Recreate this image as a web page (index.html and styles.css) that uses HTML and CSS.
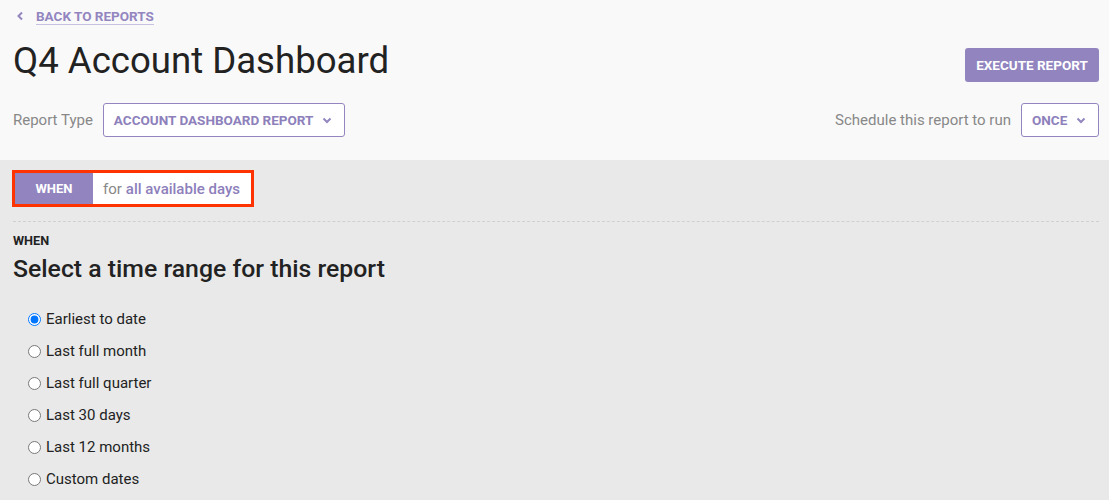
FILE: index.html
```html
<!DOCTYPE html>
<html>
<head>
<meta charset="utf-8">
<link rel="stylesheet" href="styles.css">
</head>
<body>
<header class="top">
  <a class="back" href="#"><svg class="back-ico" width="8" height="10" viewBox="0 0 8 10"><path d="M6 1.5 L2.5 5 L6 8.5" fill="none" stroke="#9386c0" stroke-width="2"/></svg><span class="back-text">BACK TO REPORTS</span></a>
  <div class="title-row">
    <h1 class="title">Q4 Account Dashboard</h1>
    <button class="execute">EXECUTE REPORT</button>
  </div>
  <div class="controls">
    <div class="ctl">
      <span class="ctl-label">Report Type</span>
      <button class="dropdown dd-type">ACCOUNT DASHBOARD REPORT<svg class="chev" width="10" height="7" viewBox="0 0 10 7"><path d="M1.5 1.5 L5 5 L8.5 1.5" fill="none" stroke="#9386c0" stroke-width="2"/></svg></button>
    </div>
    <div class="ctl">
      <span class="ctl-label">Schedule this report to run</span>
      <button class="dropdown dd-once">ONCE<svg class="chev" width="10" height="7" viewBox="0 0 10 7"><path d="M1.5 1.5 L5 5 L8.5 1.5" fill="none" stroke="#9386c0" stroke-width="2"/></svg></button>
    </div>
  </div>
</header>
<main class="body">
  <div class="summary">
    <span class="tag">WHEN</span>
    <span class="summary-text">for <b>all available days</b></span>
  </div>
  <div class="divider"></div>
  <div class="section-label">WHEN</div>
  <h2 class="section-title">Select a time range for this report</h2>
  <ul class="options">
    <li><label><input type="radio" name="r" checked> Earliest to date</label></li>
    <li><label><input type="radio" name="r"> Last full month</label></li>
    <li><label><input type="radio" name="r"> Last full quarter</label></li>
    <li><label><input type="radio" name="r"> Last 30 days</label></li>
    <li><label><input type="radio" name="r"> Last 12 months</label></li>
    <li><label><input type="radio" name="r"> Custom dates</label></li>
  </ul>
</main>
</body>
</html>
```
FILE: styles.css
```css
* { box-sizing: border-box; }
html, body { margin: 0; padding: 0; }
body {
  font-family: Roboto, "Liberation Sans", sans-serif;
  background: #e9e9e9;
  color: #222;
  height: 500px;
  overflow: hidden;
}
.top {
  background: #f9f9f9;
  padding: 6px 10px 22px 13px;
  height: 160px;
}
.back {
  display: inline-flex;
  align-items: center;
  text-decoration: none;
  color: #9386c0;
  font-size: 13.5px;
  font-weight: 700;
  margin-left: 3px;
}
.back-ico { margin-right: 12px; }
.back-text {
  border-bottom: 1px solid #c9c1e3;
  line-height: 16px;
}
.title-row {
  display: flex;
  justify-content: space-between;
  align-items: flex-start;
  margin-top: 13px;
}
.title {
  margin: 0;
  font-size: 36.6px;
  font-weight: 400;
  line-height: 46px;
  color: #222;
}
.execute {
  margin-top: 10px;
  background: #9184bf;
  color: #fff;
  border: none;
  border-radius: 3px;
  font-family: inherit;
  font-weight: 700;
  font-size: 13.5px;
  width: 134px;
  height: 34px;
  padding: 0;
}
.controls {
  display: flex;
  justify-content: space-between;
  margin-top: 19px;
}
.ctl { display: flex; align-items: center; }
.ctl-label {
  color: #888;
  font-size: 15px;
  margin-right: 10px;
}
.dropdown {
  display: inline-flex;
  align-items: center;
  height: 34px;
  border: 1px solid #9386c0;
  border-radius: 3px;
  background: #fff;
  color: #8d80bb;
  font-family: inherit;
  font-weight: 700;
  font-size: 13.5px;
  padding: 0 0 0 10px;
}
.dd-type { width: 242px; }
.dd-once { width: 78px; }
.chev { margin-left: 9px; }
.body {
  padding: 10px 10px 0 13px;
}
.summary {
  display: inline-flex;
  border: 3px solid #ff3300;
  height: 37px;
  margin-left: -1px;
}
.tag {
  background: #9184bf;
  color: #fff;
  font-weight: 700;
  font-size: 13px;
  width: 78px;
  display: flex;
  align-items: center;
  justify-content: center;
}
.summary-text {
  background: #fff;
  color: #888;
  font-size: 15px;
  display: flex;
  align-items: center;
  padding: 0 10px 0 10px;
  width: 158px;
}
.summary-text b {
  color: #8d80bb;
  font-weight: 500;
  margin-left: 4px;
}
.divider {
  border-top: 1px dashed #d0d0d0;
  margin-top: 14px;
}
.section-label {
  margin-top: 11px;
  font-size: 12.7px;
  font-weight: 700;
  color: #222;
  line-height: 15px;
}
.section-title {
  margin: 5px 0 0;
  font-size: 24.8px;
  font-weight: 500;
  line-height: 32px;
  color: #222;
}
.options {
  list-style: none;
  margin: 18px 0 0 15px;
  padding: 0;
}
.options li {
  height: 32px;
  display: flex;
  align-items: center;
}
.options label {
  display: flex;
  align-items: center;
  font-size: 15px;
  color: #222;
}
.options input {
  margin: 0 5px 0 0;
  width: 13px;
  height: 13px;
}
```
